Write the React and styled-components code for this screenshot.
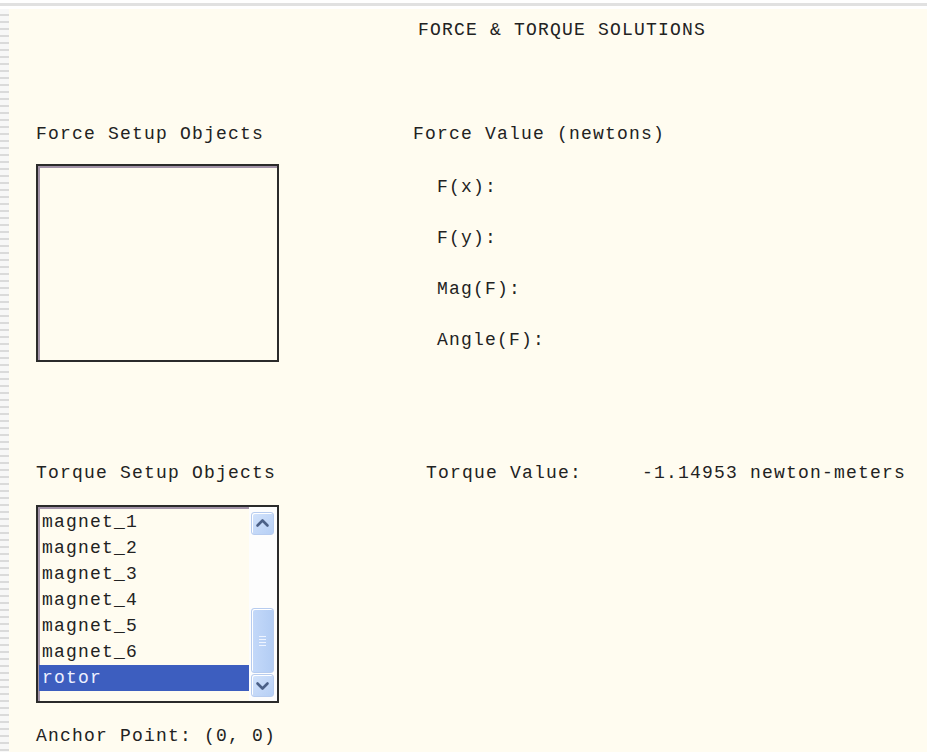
import React from "react";
import styled, { createGlobalStyle } from "styled-components";

const forceLabels = ["F(x):", "F(y):", "Mag(F):", "Angle(F):"];
const torqueObjects = [
  "magnet_1",
  "magnet_2",
  "magnet_3",
  "magnet_4",
  "magnet_5",
  "magnet_6",
  "rotor",
];

function Chevron({ up }) {
  return (
    <svg width="21" height="21" viewBox="0 0 21 21">
      <path
        d={up ? "M5.5 12.5 L10.5 7.5 L15.5 12.5" : "M5.5 8.5 L10.5 13.5 L15.5 8.5"}
        fill="none"
        stroke="#4b6087"
        strokeWidth="2.6"
        strokeLinecap="round"
        strokeLinejoin="round"
      />
    </svg>
  );
}

export default function App() {
  return (
    <>
      <GlobalStyle />
      <Page>
        <TopRule />
        <Body>
          <Strip />
          <Content>
            <Title>FORCE &amp; TORQUE SOLUTIONS</Title>

            <Section $gap={80}>
              <Column>
                <Heading>Force Setup Objects</Heading>
                <ListBox />
              </Column>
              <Column>
                <Heading>Force Value (newtons)</Heading>
                <ValueList>
                  {forceLabels.map((label) => (
                    <ValueLabel key={label}>{label}</ValueLabel>
                  ))}
                </ValueList>
              </Column>
            </Section>

            <Section $gap={99}>
              <Column>
                <Heading>Torque Setup Objects</Heading>
                <ListBox $gap={20}>
                  <Options>
                    {torqueObjects.map((name) => (
                      <Option key={name} $selected={name === "rotor"}>
                        {name}
                      </Option>
                    ))}
                  </Options>
                  <Scrollbar>
                    <ScrollButton>
                      <Chevron up />
                    </ScrollButton>
                    <Track>
                      <Thumb>
                        <Grip />
                        <Grip />
                        <Grip />
                        <Grip />
                      </Thumb>
                    </Track>
                    <ScrollButton>
                      <Chevron />
                    </ScrollButton>
                  </Scrollbar>
                </ListBox>
                <Anchor>Anchor Point: (0, 0)</Anchor>
              </Column>
              <Column>
                <Heading $indent={13}>
                  Torque Value:<TorqueValue>-1.14953 newton-meters</TorqueValue>
                </Heading>
              </Column>
            </Section>
          </Content>
        </Body>
      </Page>
    </>
  );
}

const GlobalStyle = createGlobalStyle`
  html, body {
    margin: 0;
    padding: 0;
    background: #ffffff;
  }
  body {
    font-family: "Liberation Mono", "Courier New", monospace;
    font-size: 18px;
    letter-spacing: 1.2px;
    color: #222222;
  }
`;

const Page = styled.div`
  width: 927px;
  height: 752px;
  overflow: hidden;
  background: #ffffff;
`;

const TopRule = styled.div`
  height: 3px;
  margin: 3px 0;
  background: #e1e1e1;
`;

const Body = styled.div`
  display: grid;
  grid-template-columns: 9px 1fr;
  height: 743px;
`;

const Strip = styled.div`
  background: repeating-linear-gradient(
    to bottom,
    #f7f7f7 0 5px,
    #dadada 5px 7px
  );
`;

const Content = styled.div`
  background: #fffcf0;
  padding: 9px 0 0 27px;
`;

const Title = styled.div`
  line-height: 24px;
  padding-left: 382px;
  white-space: pre;
`;

const Section = styled.div`
  display: grid;
  grid-template-columns: 377px 1fr;
  margin-top: ${(p) => p.$gap}px;
`;

const Column = styled.div`
  display: flex;
  flex-direction: column;
  align-items: flex-start;
`;

const Heading = styled.div`
  line-height: 24px;
  white-space: pre;
  padding-left: ${(p) => p.$indent || 0}px;
`;

const TorqueValue = styled.span`
  margin-left: 60px;
`;

const ValueList = styled.div`
  display: flex;
  flex-direction: column;
  gap: 27px;
  margin-top: 29px;
  padding-left: 24px;
`;

const ValueLabel = styled.div`
  line-height: 24px;
`;

const ListBox = styled.div`
  display: flex;
  width: 243px;
  height: 198px;
  box-sizing: border-box;
  margin-top: ${(p) => p.$gap || 18}px;
  border: 2px solid #2b2b2b;
  box-shadow: inset 2px 2px 0 #a293a8;
  background: #fffcf0;
`;

const Options = styled.div`
  flex: 1;
  padding: 2px 0 0 1px;
`;

const Option = styled.div`
  height: 26px;
  line-height: 27px;
  padding-left: 3px;
  background: ${(p) => (p.$selected ? "#3d5ebf" : "transparent")};
  color: ${(p) => (p.$selected ? "#eef0ff" : "#222222")};
`;

const Scrollbar = styled.div`
  display: flex;
  flex-direction: column;
  width: 28px;
  box-sizing: border-box;
  padding: 5px 3px 4px 2px;
  background: #fdfdfd;
`;

const ScrollButton = styled.div`
  display: flex;
  align-items: center;
  justify-content: center;
  height: 23px;
  box-sizing: border-box;
  border: 1px solid #b7ccef;
  border-radius: 3px;
  background: linear-gradient(135deg, #d3e3fb 0%, #b6cff5 100%);
  box-shadow: inset 1px 1px 0 #ffffff;
`;

const Track = styled.div`
  flex: 1;
  display: flex;
  flex-direction: column;
  justify-content: flex-end;
  padding-bottom: 1px;
`;

const Thumb = styled.div`
  display: flex;
  flex-direction: column;
  align-items: center;
  justify-content: center;
  gap: 2px;
  height: 65px;
  box-sizing: border-box;
  border: 1px solid #b7ccef;
  border-radius: 3px;
  background: linear-gradient(90deg, #c4d9f9 0%, #b3cdf4 100%);
  box-shadow: inset 1px 1px 0 #ffffff;
`;

const Grip = styled.div`
  width: 7px;
  height: 1px;
  background: #eef4ff;
`;

const Anchor = styled.div`
  margin-top: 21px;
  line-height: 24px;
  white-space: pre;
`;
